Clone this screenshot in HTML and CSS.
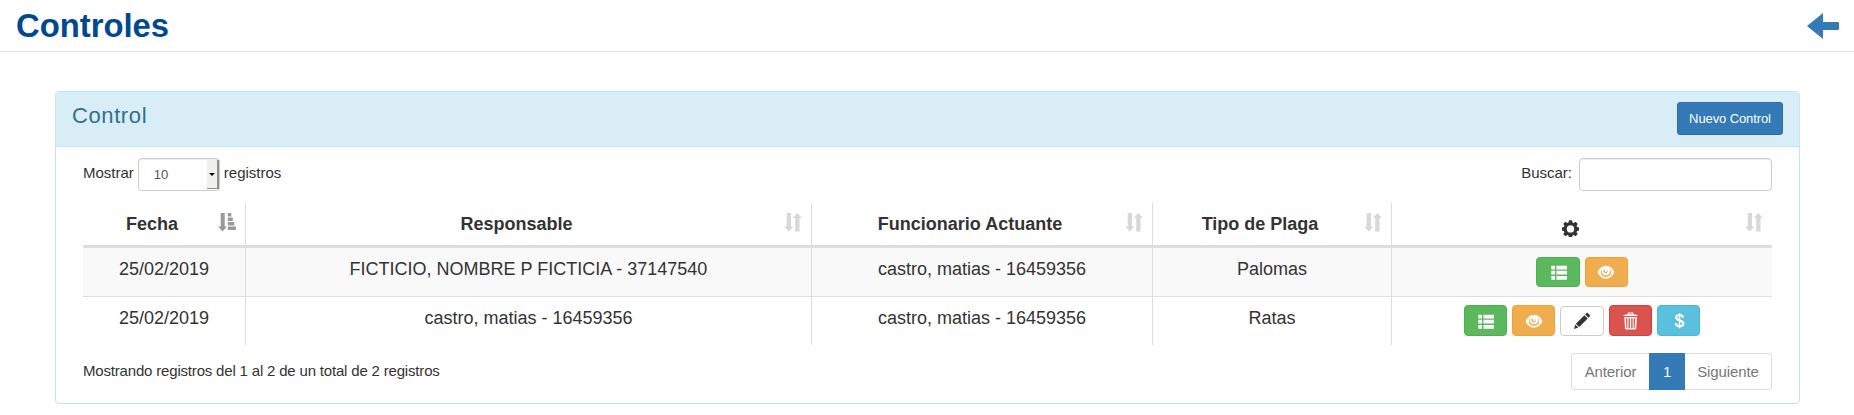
FILE: index.html
```html
<!DOCTYPE html>
<html lang="es">
<head>
<meta charset="utf-8">
<title>Controles</title>
<link rel="stylesheet" href="styles.css">
</head>
<body>
<svg class="defs" aria-hidden="true">
  <symbol id="i-sort" viewBox="0 0 18 19"><path d="M2.700 0h4.300v13.600h2.400L4.800 18.600.2 13.600h2.500zM11.200 18.600V5H8.800L13.300 0 17.900 5h-2.400v13.600z"/></symbol>
  <symbol id="i-sort-asc" viewBox="0 0 18 19"><path d="M2.700 0h4v13.600H9L4.500 18.600 0 13.600h2.700zM9.800 0h3.500v3.400H9.800zM9.800 4.400h5v3.500h-5zM9.800 8.900h6.500v3.500H9.800zM9.800 13.400h8.100V17H9.800z"/></symbol>
  <symbol id="i-cog" viewBox="0 0 18 18"><path fill-rule="evenodd" d="M7.400 .3h3.200l.5 2.300 1.300.6 2-1.300 2.300 2.300-1.300 2 .6 1.300 2.200.4v3.200l-2.200.5-.6 1.300 1.300 2-2.300 2.300-2-1.300-1.300.6-.5 2.200H7.400l-.5-2.200-1.300-.6-2 1.300-2.300-2.300 1.300-2-.6-1.300L0 11.100V7.900l2-.4.600-1.300-1.300-2 2.300-2.300 2 1.300 1.300-.6zM9 5.500a3.900 3.900 0 1 0 0 7.800 3.900 3.900 0 0 0 0-7.800z"/></symbol>
  <symbol id="i-list" viewBox="0 0 18 18"><path d="M2.700 2.700h3.300v3.900H2.300V3.100zM7.400 2.700h10.200l.4.400v3.500H7.400zM2.300 7.800H6v3.800H2.300zM7.400 7.800H18v3.800H7.400zM2.300 12.900H6v3.800H2.700l-.4-.4zM7.400 12.900H18v3.400l-.4.400H7.400z"/></symbol>
  <symbol id="i-eye" viewBox="0 0 18 18"><path fill-rule="evenodd" d="M9 2.700c3.900 0 6.900 3 8.500 6.500-1.600 3.500-4.600 6.400-8.500 6.400S2.100 12.700.5 9.200c1.600-3.500 4.600-6.500 8.500-6.500zM3.800 9.200C3.800 11.800 6 13.900 9 13.900s5.200-2.100 5.200-4.700c0-1.300-.5-2.700-1.300-3.600.4 1 .5 1.800.5 2.400A4.400 4.400 0 0 1 9 12.400 4.400 4.400 0 0 1 4.600 8c0-.6.1-1.400.5-2.400C4.300 6.500 3.800 7.900 3.800 9.200z"/><path fill="#f0ad4e" d="M6.500 6.800c.9-.6 1.700-.3 1.500.7-.2 1 .3 1.700 1.200 1.500.8-.2.7-1.200 1.200-1.900.9 1 .3 3.100-1.300 3.300-1.900.3-3.300-1.800-2.600-3.600z"/></symbol>
  <symbol id="i-pencil" viewBox="0 0 18 18"><path d="M13.400 1.200c.5-.5 1-.5 1.500 0l1.800 1.800c.5.500.5 1 0 1.500l-1.200 1.200-3.300-3.300zM11.400 3.200l3.300 3.300-8.500 8.500-3.300-3.300zM2.300 12.500l3.100 3.100L1 17z"/></symbol>
  <symbol id="i-trash" viewBox="0 0 18 18"><path fill-rule="evenodd" d="M2.600 4.100V2.900l4.200-.6v-.9Q6.800.5 7.700.5h3.800q.9 0 .9.900v.9l4.200.6v1.200zM8 2.200h3.200v-.7H8zM3.300 5h12.600l-.6 11.300q-.1 1.100-1.200 1.100H5.200q-1.100 0-1.200-1.100zM5 6.200l.4 10h1V6.200zM7.500 6.200v10h1.400v-10zM10.200 6.200v10h1.400v-10zM12.700 6.200v10h1l.4-10z"/></symbol>
  <symbol id="i-dollar" viewBox="0 0 18 18"><path fill="none" stroke="currentColor" stroke-width="2.100" d="M13.100 5.600C12.700 3.900 11.500 3 9.600 3 7.500 3 6.200 4 6.200 5.500c0 3.900 7.200 2.100 7.200 6.100 0 1.700-1.400 2.800-3.700 2.800-2.400 0-3.700-1.200-3.900-3.200"/><path d="M8.900 1.100h1.400v15.200H8.900z"/></symbol>
</svg>

<header class="page-header">
  <h1 class="page-title">Controles</h1>
  <a class="back" aria-label="Volver"><svg class="back-icon" viewBox="0 0 32 26"><path d="M0 13 16 0v9h15q1 0 1 1v6q0 1-1 1H16v9z"/></svg></a>
</header>

<main class="panel">
  <div class="panel-heading">
    <h2 class="panel-title">Control</h2>
    <button class="btn-new">Nuevo Control</button>
  </div>
  <div class="panel-body">
    <div class="toolbar">
      <div class="length">
        <span>Mostrar</span>
        <span class="select"><span class="select-value">10</span><span class="select-arrow"></span></span>
        <span>registros</span>
      </div>
      <label class="search">Buscar:<input class="search-input" type="text"></label>
    </div>
    <table class="grid">
      <colgroup><col class="c1"><col class="c2"><col class="c3"><col class="c4"><col class="c5"></colgroup>
      <thead>
        <tr>
          <th>Fecha<svg class="sort active"><use href="#i-sort-asc"/></svg></th>
          <th>Responsable<svg class="sort"><use href="#i-sort"/></svg></th>
          <th>Funcionario Actuante<svg class="sort"><use href="#i-sort"/></svg></th>
          <th>Tipo de Plaga<svg class="sort"><use href="#i-sort"/></svg></th>
          <th><svg class="cog"><use href="#i-cog"/></svg><svg class="sort"><use href="#i-sort"/></svg></th>
        </tr>
      </thead>
      <tbody>
        <tr class="odd">
          <td>25/02/2019</td><td>FICTICIO, NOMBRE P FICTICIA - 37147540</td><td>castro, matias - 16459356</td><td>Palomas</td>
          <td><div class="actions">
            <button class="btn green"><svg><use href="#i-list"/></svg></button>
            <button class="btn orange"><svg><use href="#i-eye"/></svg></button>
          </div></td>
        </tr>
        <tr class="even">
          <td>25/02/2019</td><td>castro, matias - 16459356</td><td>castro, matias - 16459356</td><td>Ratas</td>
          <td><div class="actions">
            <button class="btn green"><svg><use href="#i-list"/></svg></button>
            <button class="btn orange"><svg><use href="#i-eye"/></svg></button>
            <button class="btn white"><svg><use href="#i-pencil"/></svg></button>
            <button class="btn red"><svg><use href="#i-trash"/></svg></button>
            <button class="btn blue"><svg><use href="#i-dollar"/></svg></button>
          </div></td>
        </tr>
      </tbody>
    </table>
    <div class="footer">
      <div class="info">Mostrando registros del 1 al 2 de un total de 2 registros</div>
      <nav class="pages"><a class="page prev">Anterior</a><a class="page current">1</a><a class="page next">Siguiente</a></nav>
    </div>
  </div>
</main>
</body>
</html>
```
FILE: styles.css
```css
* { box-sizing: border-box; }
body {
  margin: 0;
  background: #fff;
  color: #333;
  font: 15px/20px "Liberation Sans", Arial, sans-serif;
}
.defs { display: none; }

.page-header {
  display: flex;
  justify-content: space-between;
  align-items: flex-start;
  height: 52px;
  padding: 7px 15px 0 16px;
  border-bottom: 1px solid #e0e0e0;
}
.page-title { margin: 0; font-size: 32.8px; line-height: 37px; font-weight: bold; color: #004990; }
.back { padding-top: 6px; color: #337ab7; }
.back-icon { display: block; width: 32px; height: 26px; fill: currentColor; }

.panel {
  width: 1745px;
  height: 313px;
  margin: 39px 0 0 55px;
  border: 1px solid #bce8f1;
  border-radius: 4px;
  box-shadow: 0 1px 1px rgba(0, 0, 0, .05);
}
.panel-heading {
  display: flex;
  justify-content: space-between;
  align-items: flex-start;
  height: 55px;
  padding: 10px 16px 0;
  background: #d9edf7;
  border-bottom: 1px solid #bce8f1;
  border-radius: 3px 3px 0 0;
}
.panel-title { margin: 0; font-size: 22px; line-height: 27px; font-weight: normal; letter-spacing: .6px; color: #31708f; }
.btn-new {
  width: 106px;
  height: 33px;
  padding: 0;
  border: 1px solid #2e6da4;
  border-radius: 3px;
  background: #337ab7;
  color: #fff;
  font: 13px/19px "Liberation Sans", Arial, sans-serif;
  letter-spacing: -.1px;
}

.panel-body { padding: 11px 27px 0; }
.toolbar { display: flex; justify-content: space-between; height: 33px; }
.length { display: flex; gap: 4px; line-height: 30px; }
.select {
  display: flex;
  justify-content: space-between;
  width: 82px;
  height: 33px;
  padding: 1px 0 1px 15px;
  border: 1px solid #ccc;
  border-radius: 4px;
  box-shadow: inset 0 1px 1px rgba(0, 0, 0, .075);
  color: #555;
}
.select-value { font-size: 13px; line-height: 30px; }
.select-arrow {
  display: flex;
  align-items: center;
  justify-content: center;
  width: 12px;
  background: #f0f0ee;
  border-right: 2px solid #8f8f8b;
  border-bottom: 1px solid #8f8f8b;
}
.select-arrow::after { content: ""; border: 3px solid transparent; border-top-color: #000; border-bottom: 0; }
.search { display: flex; gap: 7px; line-height: 30px; }
.search-input {
  width: 193px;
  height: 33px;
  border: 1px solid #ccc;
  border-radius: 4px;
  box-shadow: inset 0 1px 1px rgba(0, 0, 0, .075);
}

.grid {
  width: 1689px;
  margin-top: 12px;
  table-layout: fixed;
  border-collapse: separate;
  border-spacing: 0;
  font-size: 18px;
  line-height: 25px;
  text-align: center;
}
.c1 { width: 163px; }
.c2 { width: 566px; }
.c3 { width: 341px; }
.c4 { width: 239px; }
.c5 { width: 380px; }
.grid th {
  position: relative;
  height: 45px;
  padding: 9px 31px 8px 7px;
  border-bottom: 3px solid #ddd;
  border-right: 1px solid #ddd;
  vertical-align: top;
}
.grid td { height: 49px; padding: 9px 8px 0; border-right: 1px solid #ddd; vertical-align: top; }
.grid .even td { height: 48px; }
.grid th:last-child, .grid td:last-child { border-right: 0; }
.odd td { background: #f9f9f9; border-bottom: 1px solid #ddd; }
.sort { position: absolute; right: 9px; top: 10px; width: 18px; height: 19px; fill: #d8d8d8; }
.sort.active { fill: #999; }
.cog { display: block; width: 17px; height: 17px; margin: 8px auto 0; fill: #333; }

.actions { display: flex; justify-content: center; gap: 5px; }
.even .actions { margin-top: -1px; }
.btn {
  display: flex;
  align-items: center;
  justify-content: center;
  width: 43.400px;
  height: 30px;
  padding: 0;
  border: 1px solid;
  border-radius: 4px;
  color: #fff;
}
.even .btn { height: 31px; }
.even .btn.white { height: 30px; margin-top: 1px; }
.btn svg { width: 18px; height: 18px; fill: currentColor; }
.green { background: #5cb85c; border-color: #4cae4c; }
.orange { background: #f0ad4e; border-color: #eea236; }
.white { background: #fff; border-color: #ccc; color: #333; }
.red { background: #d9534f; border-color: #d43f3a; }
.blue { background: #5bc0de; border-color: #46b8da; }

.footer { display: flex; justify-content: space-between; margin-top: 8px; }
.info { padding-top: 8px; letter-spacing: -.18px; }
.pages { display: flex; height: 37px; line-height: 36px; text-align: center; letter-spacing: -.1px; }
.page { border: 1px solid #ddd; color: #777; }
.prev { width: 78px; border-right: 0; border-radius: 4px 0 0 4px; }
.current { width: 36px; border-color: #337ab7; background: #337ab7; color: #fff; }
.next { width: 87px; border-left: 0; border-radius: 0 4px 4px 0; }
```
